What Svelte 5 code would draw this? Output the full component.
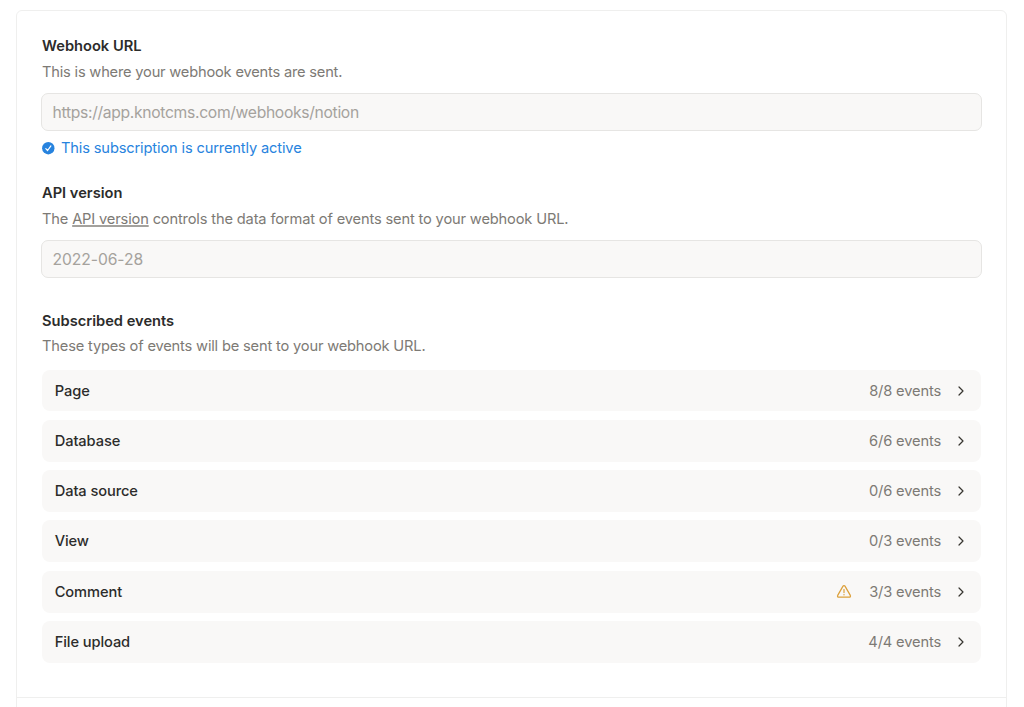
<script lang="ts">
  let url = 'https://app.knotcms.com/webhooks/notion';
  let version = '2022-06-28';

  const groups = [
    { name: 'Page', on: 8, total: 8 },
    { name: 'Database', on: 6, total: 6 },
    { name: 'Data source', on: 0, total: 6 },
    { name: 'View', on: 0, total: 3 },
    { name: 'Comment', on: 3, total: 3, warning: true },
    { name: 'File upload', on: 4, total: 4 }
  ];
</script>

<div class="card">
  <div class="body">
    <section class="url">
      <h3>Webhook URL</h3>
      <p>This is where your webhook events are sent.</p>
      <input class="address" type="text" value={url} disabled />
      <div class="status">
        <svg width="13" height="13" viewBox="0 0 13 13">
          <circle cx="6.3" cy="6.2" r="6.2" fill="#2783de" />
          <path d="M3.8 6.6 5.6 8.5 8.9 3.9" fill="none" stroke="#fff" stroke-width="1.2" stroke-linecap="round" stroke-linejoin="round" />
        </svg>
        <span>This subscription is currently active</span>
      </div>
    </section>

    <section class="version">
      <h3>API version</h3>
      <p class="long">The <a href="#/versioning">API version</a> controls the data format of events sent to your webhook URL.</p>
      <input type="text" value={version} disabled />
    </section>

    <section class="events">
      <h3>Subscribed events</h3>
      <p>These types of events will be sent to your webhook URL.</p>
      <div class="groups">
        {#each groups as group}
          <div class="group">
            <span class="name">{group.name}</span>
            {#if group.warning}
              <svg class="warning" width="16" height="15" viewBox="0 0 16 15" fill="none" stroke="#dca03a" stroke-linecap="round" stroke-linejoin="round">
                <path d="M7 2.1 1.7 11.4a1.1 1.1 0 0 0 1 1.7h10.6a1.1 1.1 0 0 0 1-1.7L9 2.1a1.15 1.15 0 0 0-2 0Z" stroke-width="1.25" />
                <path d="M8 5.6v3" stroke-width="1.2" />
                <circle cx="8" cy="10.7" r="0.7" fill="#dca03a" stroke="none" />
              </svg>
            {/if}
            <span class="count">{group.on}/{group.total} events</span>
            <svg class="chevron" width="8" height="10" viewBox="0 0 8 10" fill="none" stroke="#373530" stroke-width="1.2" stroke-linecap="round" stroke-linejoin="round">
              <path d="M2 1 6 5 2 9" />
            </svg>
          </div>
        {/each}
      </div>
    </section>
  </div>
  <div class="footer"></div>
</div>

<style>
  :global(body) {
    background: #fff;
    overflow: hidden;
  }

  .card {
    box-sizing: border-box;
    width: 991px;
    height: 720px;
    margin: 10px 0 0 16px;
    border: 1px solid #efefee;
    border-radius: 6px;
    font-family: Inter, "Liberation Sans", sans-serif;
    font-size: 14.67px;
    color: #2c2c2b;
  }

  .body {
    box-sizing: border-box;
    height: 686px;
    padding: 25px 25px 0;
  }

  .url {
    height: 147px;
  }

  .version {
    height: 128px;
  }

  h3 {
    margin: 0;
    font-size: 14.67px;
    font-weight: 600;
    line-height: 21px;
  }

  p {
    margin: 5px 0 11px;
    line-height: 20px;
    letter-spacing: -0.2px;
    color: #7d7a75;
  }

  .long {
    letter-spacing: -0.16px;
  }

  a {
    color: inherit;
    text-decoration-color: #a3a19d;
    text-decoration-thickness: 1.5px;
    text-underline-offset: 1px;
  }

  input {
    display: block;
    box-sizing: border-box;
    width: calc(100% + 2px);
    height: 38px;
    margin: 0 -1px;
    padding: 0 10.6px;
    border: 1px solid #e6e5e3;
    border-radius: 7px;
    background: #f9f8f7;
    font-family: inherit;
    font-size: 15.7px;
    letter-spacing: -0.1px;
    color: #a5a29d;
  }

  .address {
    letter-spacing: -0.33px;
  }

  .status {
    display: flex;
    align-items: center;
    gap: 6px;
    margin-top: 7px;
    line-height: 20px;
    letter-spacing: -0.15px;
    color: #2783de;
  }

  .events p {
    margin: 4px 0 13.6px;
    letter-spacing: -0.18px;
  }

  .groups {
    display: flex;
    flex-direction: column;
    gap: 8.4px;
  }

  .group {
    display: flex;
    align-items: center;
    box-sizing: border-box;
    height: 41.9px;
    padding: 0 16px 0 12.7px;
    border-radius: 8px;
    background: #f9f8f7;
  }

  .name {
    flex: 1;
    font-weight: 500;
    letter-spacing: -0.1px;
  }

  .warning {
    margin-right: 17px;
  }

  .count {
    letter-spacing: -0.15px;
    color: #7d7a75;
  }

  .chevron {
    margin-left: 16px;
  }

  .footer {
    border-top: 1px solid #efefee;
  }
</style>
